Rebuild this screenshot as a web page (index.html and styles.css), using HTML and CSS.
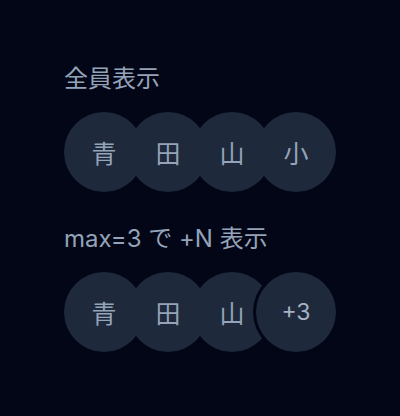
FILE: index.html
```html
<!DOCTYPE html>
<html lang="ja">
<head>
    <meta charset="UTF-8">
    <meta name="viewport" content="width=device-width, initial-scale=1.0">
    <title>Avatar Group</title>
    <link rel="stylesheet" href="styles.css">
</head>
<body>
    <div class="container">
        <!-- 全員表示 -->
        <section class="demo">
            <p class="label">全員表示</p>
            <div class="avatar-group">
                <span class="avatar">青</span>
                <span class="avatar">田</span>
                <span class="avatar">山</span>
                <span class="avatar">小</span>
            </div>
        </section>

        <!-- max=3 -->
        <section class="demo">
            <p class="label">max=3 で +N 表示</p>
            <div class="avatar-group">
                <span class="avatar">青</span>
                <span class="avatar">田</span>
                <span class="avatar">山</span>
                <span class="avatar more">+3</span>
            </div>
        </section>
    </div>
</body>
</html>
```

FILE: styles.css
```css
body { margin: 0; background-color: #020617; font-family: Inter, "Noto Sans CJK JP", sans-serif; }
.container { padding: 64px 64px 0; }
.demo { margin-bottom: 32px; }
.label { margin: 0 0 18px; font-size: 24px; line-height: 30px; color: #94a3b8; }
.avatar-group { display: flex; }
.avatar { display: flex; align-items: center; justify-content: center; width: 80px; height: 80px; border-radius: 50%; background-color: #1e293b; color: #94a3b8; font-size: 25px; }
.avatar + .avatar { margin-left: -16px; }
.avatar.more { position: relative; box-shadow: 0 0 0 3px #020617; font-size: 23px; color: #a5b1c4; }
```
